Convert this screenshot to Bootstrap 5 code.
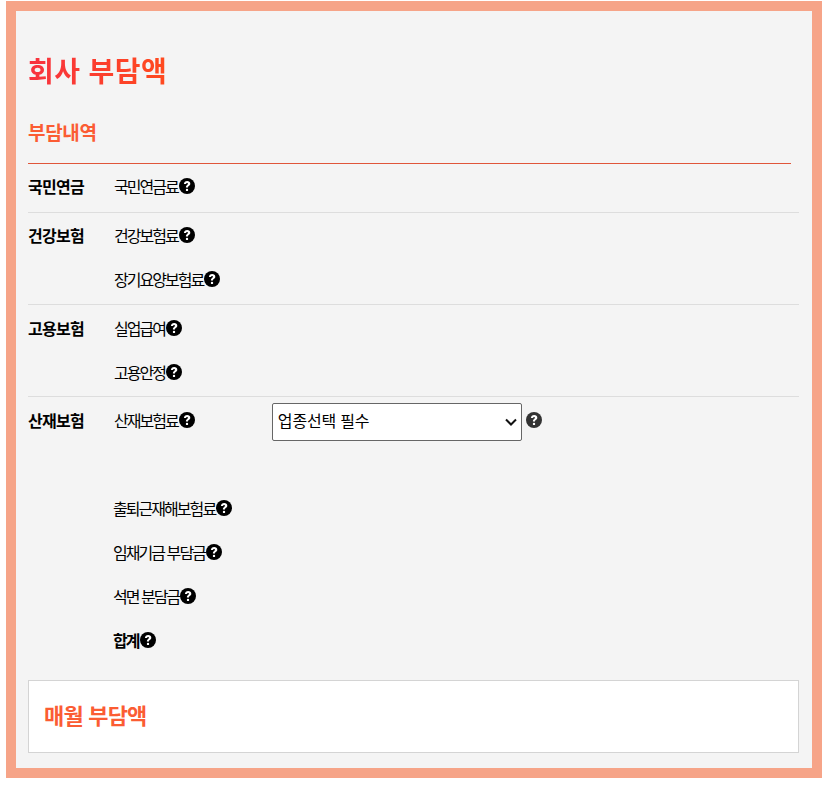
<!DOCTYPE html>
<html lang="ko"><head><meta charset="utf-8">
<link href="https://cdn.jsdelivr.net/npm/bootstrap@5.3.0/dist/css/bootstrap.min.css" rel="stylesheet">
<style>
html,body{background:#fff}
body{font-family:"Noto Sans CJK KR","Liberation Sans",sans-serif;font-size:16px;color:#000;margin:0}
.panel{width:816px;height:777px;margin:1px 0 0 6px;border:10px solid #f6a488;background:#f4f4f4;padding:0 13px 0 12px;display:flex;flex-direction:column}
.title1{font-size:28px;font-weight:700;line-height:40px;margin:39px 0 0;letter-spacing:.4px;background:linear-gradient(90deg,#f8323f,#ff4a1e);-webkit-background-clip:text;background-clip:text;color:transparent;width:fit-content}
.title2{font-size:19px;font-weight:700;line-height:28px;margin:28px 0 0;color:#fb5c33;letter-spacing:-.3px}
.rule{height:1px;background:#e0553a;margin:17px 8px 0 0}
.grp{display:flex;border-bottom:1px solid #ddd;padding-top:11px}
.grp.mid{padding-top:12px}
.grp.last{border:0;padding-top:12px}
.lab{width:86px;flex:none;font-weight:700;font-size:16px;letter-spacing:-.75px;line-height:22px}
.itm{height:22px;line-height:22px;letter-spacing:-1.95px;display:flex;align-items:center;margin-bottom:22px;white-space:nowrap}
.grp .itm:last-child{margin-bottom:14px}
.grp.mid .itm:last-child{margin-bottom:13px}
.grp.one .itm:last-child{margin-bottom:15px}
.qi{flex:none;display:block;width:16px;height:16px;margin-left:1px;letter-spacing:0}
.selwrap{display:flex;align-items:center;margin-left:77px;margin-top:4px}
.sel{width:250px;height:38px;border:1px solid #666;border-radius:2px;background:#fff;padding:0 4px 4px 5px;font-size:16px;display:flex;align-items:center;justify-content:space-between;letter-spacing:-.2px}
.sel svg{margin-top:4px}
.qi2{margin:0 0 4px 4px;fill:#333}
.sub{padding-left:85px;padding-top:52px}
.b{font-weight:700}
.box{border:1px solid #d4d4d4;background:#fff;height:73px;display:flex;align-items:center;padding:0 0 4px 15px;margin-top:7px;font-size:22px;font-weight:700;color:#fb5c33;letter-spacing:-.8px}
</style></head><body>
<svg width="0" height="0" class="d-block position-absolute"><defs><symbol id="q" viewBox="0 0 16 16"><circle cx="8" cy="8" r="8"/><path d="M4.9 6.1C5 4.1 6.4 3.1 8.2 3.1c1.8 0 3.1 1.1 3.1 2.6 0 1.1-.6 1.7-1.4 2.2-.7.5-.9.7-.9 1.4v.3H6.9V9.1c0-1.1.4-1.7 1.2-2.2.6-.4.9-.7.9-1.1 0-.5-.4-.8-.9-.8-.6 0-1 .4-1 1.1zM8 10.7a1.2 1.2 0 1 1 0 2.4 1.2 1.2 0 0 1 0-2.4z" fill="#fff"/></symbol></defs></svg>
<div class="panel">
<h1 class="title1">회사 부담액</h1>
<h2 class="title2">부담내역</h2>
<div class="rule"></div>
<div class="grp one"><div class="lab">국민연금</div><div><div class="itm">국민연금료<svg class="qi"><use href="#q"/></svg></div></div></div>
<div class="grp"><div class="lab">건강보험</div><div><div class="itm">건강보험료<svg class="qi"><use href="#q"/></svg></div><div class="itm">장기요양보험료<svg class="qi"><use href="#q"/></svg></div></div></div>
<div class="grp mid"><div class="lab">고용보험</div><div><div class="itm">실업급여<svg class="qi"><use href="#q"/></svg></div><div class="itm">고용안정<svg class="qi"><use href="#q"/></svg></div></div></div>
<div class="grp last"><div class="lab">산재보험</div><div><div class="itm">산재보험료<svg class="qi"><use href="#q"/></svg><div class="selwrap"><div class="sel"><span>업종선택 필수</span><svg width="12" height="8" viewBox="0 0 12 8"><path d="M1 1.5l5 5 5-5" fill="none" stroke="#111" stroke-width="2"/></svg></div><svg class="qi qi2"><use href="#q"/></svg></div></div></div></div>
<div class="sub">
<div class="itm">출퇴근재해보험료<svg class="qi"><use href="#q"/></svg></div>
<div class="itm">임채기금 부담금<svg class="qi"><use href="#q"/></svg></div>
<div class="itm">석면 분담금<svg class="qi"><use href="#q"/></svg></div>
<div class="itm b">합계<svg class="qi"><use href="#q"/></svg></div>
</div>
<div class="box">매월 부담액</div>
</div>
</body></html>
